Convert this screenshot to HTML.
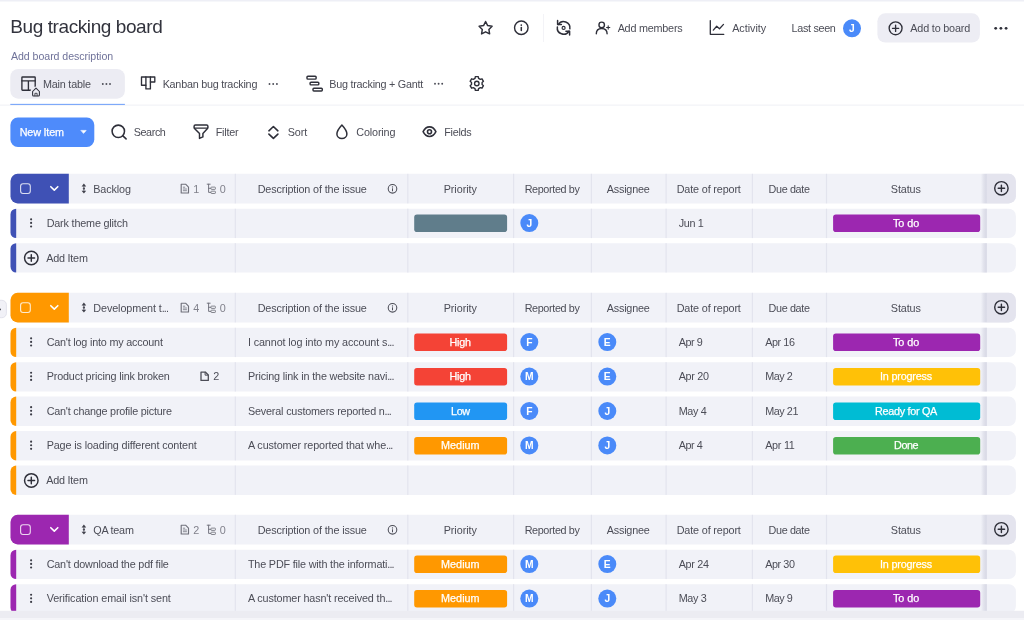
<!DOCTYPE html>
<html lang="en"><head><meta charset="utf-8"><title>Bug tracking board</title>
<style>
html,body{margin:0;padding:0;background:#fff}
body{width:1024px;height:620px;position:relative;overflow:hidden;font-family:"Liberation Sans", sans-serif}
body>div{position:absolute}
.ov{position:absolute;left:0;top:0;width:1024px;height:620px;overflow:hidden;pointer-events:none}
.tx{left:0;top:0;width:1024px;height:620px;will-change:transform}
.t{position:absolute;white-space:nowrap;line-height:20px;height:20px}
</style></head><body>
<svg class="ov" viewBox="0 0 1024 620">
<defs><linearGradient id="sh" x1="0" x2="1" y1="0" y2="0"><stop offset="0" stop-color="#d4d5e2" stop-opacity="0"/><stop offset=".45" stop-color="#d4d5e2" stop-opacity=".5"/><stop offset="1" stop-color="#d6d7e4" stop-opacity="1"/></linearGradient>
<linearGradient id="bt" x1="0" x2="0" y1="0" y2="1"><stop offset="0" stop-color="#ececf2"/><stop offset=".74" stop-color="#ececf2"/><stop offset=".8" stop-color="#f5f5f9"/><stop offset="1" stop-color="#f5f5f9"/></linearGradient></defs>
<rect x="0" y="0" width="1024" height="1.5" rx="0" fill="#eeeff6"/>
<rect x="543" y="14" width="1" height="28" rx="0" fill="#f3f3f7"/>
<rect x="877.4" y="13.3" width="102.5" height="29.3" rx="8" fill="#ededf4"/>
<rect x="10.3" y="69" width="114.6" height="29.7" rx="8" fill="#ececf3"/>
<rect x="0" y="104.6" width="1024" height="1" rx="0" fill="#eff0f5"/>
<rect x="10.3" y="103.85" width="114.6" height="1.1" rx="0" fill="#78a5f9"/>
<rect x="10.4" y="117.5" width="83.9" height="29.4" rx="7.5" fill="#4e8bfb"/>
<path d="M17.7 173.8H1008.7A7.2 7.2 0 0 1 1015.9 181V196.2A7.2 7.2 0 0 1 1008.7 203.4H17.7A7.2 7.2 0 0 1 10.5 196.2V181A7.2 7.2 0 0 1 17.7 173.8Z" fill="#f1f2f8"/>
<path d="M17.7 173.8H68.8V203.4H17.7A7.2 7.2 0 0 1 10.5 196.2V181A7.2 7.2 0 0 1 17.7 173.8Z" fill="#3f51b5"/>
<path d="M986.8 173.8H1008.7A7.2 7.2 0 0 1 1015.9 181V196.2A7.2 7.2 0 0 1 1008.7 203.4H986.8V173.8Z" fill="#e4e4ee"/>
<rect x="234.7" y="173.8" width="1.2" height="29.6" fill="#e3e4ee"/>
<rect x="407.2" y="173.8" width="1.2" height="29.6" fill="#e3e4ee"/>
<rect x="513" y="173.8" width="1.2" height="29.6" fill="#e3e4ee"/>
<rect x="590.8" y="173.8" width="1.2" height="29.6" fill="#e3e4ee"/>
<rect x="665.5" y="173.8" width="1.2" height="29.6" fill="#e3e4ee"/>
<rect x="751.8" y="173.8" width="1.2" height="29.6" fill="#e3e4ee"/>
<rect x="825.9" y="173.8" width="1.2" height="29.6" fill="#e3e4ee"/>
<rect x="980.8" y="173.8" width="6" height="29.6" fill="url(#sh)"/>
<path d="M17.7 208.7H1008.7A7.2 7.2 0 0 1 1015.9 215.9V230.9A7.2 7.2 0 0 1 1008.7 238.1H17.7A7.2 7.2 0 0 1 10.5 230.9V215.9A7.2 7.2 0 0 1 17.7 208.7Z" fill="#f1f2f8"/>
<path d="M16.2 208.7H16.2V238.1H16.2A5.7 5.7 0 0 1 10.5 232.4V214.4A5.7 5.7 0 0 1 16.2 208.7Z" fill="#3f51b5"/>
<rect x="234.7" y="208.7" width="1.2" height="29.4" fill="#e3e4ee"/>
<rect x="407.2" y="208.7" width="1.2" height="29.4" fill="#e3e4ee"/>
<rect x="513" y="208.7" width="1.2" height="29.4" fill="#e3e4ee"/>
<rect x="590.8" y="208.7" width="1.2" height="29.4" fill="#e3e4ee"/>
<rect x="665.5" y="208.7" width="1.2" height="29.4" fill="#e3e4ee"/>
<rect x="751.8" y="208.7" width="1.2" height="29.4" fill="#e3e4ee"/>
<rect x="825.9" y="208.7" width="1.2" height="29.4" fill="#e3e4ee"/>
<rect x="980.8" y="208.7" width="6" height="29.4" fill="url(#sh)"/>
<rect x="414.2" y="214.6" width="92.9" height="17.5" rx="2.8" fill="#607d8b"/>
<rect x="833.1" y="214.6" width="147.1" height="17.5" rx="2.8" fill="#9c27b0"/>
<path d="M17.7 243.15H1008.7A7.2 7.2 0 0 1 1015.9 250.35V265.35A7.2 7.2 0 0 1 1008.7 272.55H17.7A7.2 7.2 0 0 1 10.5 265.35V250.35A7.2 7.2 0 0 1 17.7 243.15Z" fill="#f1f2f8"/>
<path d="M16.2 243.15H16.2V272.55H16.2A5.7 5.7 0 0 1 10.5 266.85V248.85A5.7 5.7 0 0 1 16.2 243.15Z" fill="#3f51b5"/>
<rect x="234.7" y="243.15" width="1.2" height="29.4" fill="#e3e4ee"/>
<rect x="407.2" y="243.15" width="1.2" height="29.4" fill="#e3e4ee"/>
<rect x="513" y="243.15" width="1.2" height="29.4" fill="#e3e4ee"/>
<rect x="590.8" y="243.15" width="1.2" height="29.4" fill="#e3e4ee"/>
<rect x="665.5" y="243.15" width="1.2" height="29.4" fill="#e3e4ee"/>
<rect x="751.8" y="243.15" width="1.2" height="29.4" fill="#e3e4ee"/>
<rect x="825.9" y="243.15" width="1.2" height="29.4" fill="#e3e4ee"/>
<rect x="980.8" y="243.15" width="6" height="29.4" fill="url(#sh)"/>
<rect x="-6" y="300.3" width="12.4" height="17.4" rx="4.5" fill="#f1f1f7" stroke="#e2e2ec" stroke-width="1"/>
<path d="M17.7 292.8H1008.7A7.2 7.2 0 0 1 1015.9 300V315.2A7.2 7.2 0 0 1 1008.7 322.4H17.7A7.2 7.2 0 0 1 10.5 315.2V300A7.2 7.2 0 0 1 17.7 292.8Z" fill="#f1f2f8"/>
<path d="M17.7 292.8H68.8V322.4H17.7A7.2 7.2 0 0 1 10.5 315.2V300A7.2 7.2 0 0 1 17.7 292.8Z" fill="#ff9800"/>
<path d="M986.8 292.8H1008.7A7.2 7.2 0 0 1 1015.9 300V315.2A7.2 7.2 0 0 1 1008.7 322.4H986.8V292.8Z" fill="#e4e4ee"/>
<rect x="234.7" y="292.8" width="1.2" height="29.6" fill="#e3e4ee"/>
<rect x="407.2" y="292.8" width="1.2" height="29.6" fill="#e3e4ee"/>
<rect x="513" y="292.8" width="1.2" height="29.6" fill="#e3e4ee"/>
<rect x="590.8" y="292.8" width="1.2" height="29.6" fill="#e3e4ee"/>
<rect x="665.5" y="292.8" width="1.2" height="29.6" fill="#e3e4ee"/>
<rect x="751.8" y="292.8" width="1.2" height="29.6" fill="#e3e4ee"/>
<rect x="825.9" y="292.8" width="1.2" height="29.6" fill="#e3e4ee"/>
<rect x="980.8" y="292.8" width="6" height="29.6" fill="url(#sh)"/>
<path d="M17.7 327.7H1008.7A7.2 7.2 0 0 1 1015.9 334.9V349.9A7.2 7.2 0 0 1 1008.7 357.1H17.7A7.2 7.2 0 0 1 10.5 349.9V334.9A7.2 7.2 0 0 1 17.7 327.7Z" fill="#f1f2f8"/>
<path d="M16.2 327.7H16.2V357.1H16.2A5.7 5.7 0 0 1 10.5 351.4V333.4A5.7 5.7 0 0 1 16.2 327.7Z" fill="#ff9800"/>
<rect x="234.7" y="327.7" width="1.2" height="29.4" fill="#e3e4ee"/>
<rect x="407.2" y="327.7" width="1.2" height="29.4" fill="#e3e4ee"/>
<rect x="513" y="327.7" width="1.2" height="29.4" fill="#e3e4ee"/>
<rect x="590.8" y="327.7" width="1.2" height="29.4" fill="#e3e4ee"/>
<rect x="665.5" y="327.7" width="1.2" height="29.4" fill="#e3e4ee"/>
<rect x="751.8" y="327.7" width="1.2" height="29.4" fill="#e3e4ee"/>
<rect x="825.9" y="327.7" width="1.2" height="29.4" fill="#e3e4ee"/>
<rect x="980.8" y="327.7" width="6" height="29.4" fill="url(#sh)"/>
<rect x="414.2" y="333.6" width="92.9" height="17.5" rx="2.8" fill="#f44336"/>
<rect x="833.1" y="333.6" width="147.1" height="17.5" rx="2.8" fill="#9c27b0"/>
<path d="M17.7 362.15H1008.7A7.2 7.2 0 0 1 1015.9 369.35V384.35A7.2 7.2 0 0 1 1008.7 391.55H17.7A7.2 7.2 0 0 1 10.5 384.35V369.35A7.2 7.2 0 0 1 17.7 362.15Z" fill="#f1f2f8"/>
<path d="M16.2 362.15H16.2V391.55H16.2A5.7 5.7 0 0 1 10.5 385.85V367.85A5.7 5.7 0 0 1 16.2 362.15Z" fill="#ff9800"/>
<rect x="234.7" y="362.15" width="1.2" height="29.4" fill="#e3e4ee"/>
<rect x="407.2" y="362.15" width="1.2" height="29.4" fill="#e3e4ee"/>
<rect x="513" y="362.15" width="1.2" height="29.4" fill="#e3e4ee"/>
<rect x="590.8" y="362.15" width="1.2" height="29.4" fill="#e3e4ee"/>
<rect x="665.5" y="362.15" width="1.2" height="29.4" fill="#e3e4ee"/>
<rect x="751.8" y="362.15" width="1.2" height="29.4" fill="#e3e4ee"/>
<rect x="825.9" y="362.15" width="1.2" height="29.4" fill="#e3e4ee"/>
<rect x="980.8" y="362.15" width="6" height="29.4" fill="url(#sh)"/>
<rect x="414.2" y="368.05" width="92.9" height="17.5" rx="2.8" fill="#f44336"/>
<rect x="833.1" y="368.05" width="147.1" height="17.5" rx="2.8" fill="#ffc107"/>
<path d="M17.7 396.6H1008.7A7.2 7.2 0 0 1 1015.9 403.8V418.8A7.2 7.2 0 0 1 1008.7 426H17.7A7.2 7.2 0 0 1 10.5 418.8V403.8A7.2 7.2 0 0 1 17.7 396.6Z" fill="#f1f2f8"/>
<path d="M16.2 396.6H16.2V426H16.2A5.7 5.7 0 0 1 10.5 420.3V402.3A5.7 5.7 0 0 1 16.2 396.6Z" fill="#ff9800"/>
<rect x="234.7" y="396.6" width="1.2" height="29.4" fill="#e3e4ee"/>
<rect x="407.2" y="396.6" width="1.2" height="29.4" fill="#e3e4ee"/>
<rect x="513" y="396.6" width="1.2" height="29.4" fill="#e3e4ee"/>
<rect x="590.8" y="396.6" width="1.2" height="29.4" fill="#e3e4ee"/>
<rect x="665.5" y="396.6" width="1.2" height="29.4" fill="#e3e4ee"/>
<rect x="751.8" y="396.6" width="1.2" height="29.4" fill="#e3e4ee"/>
<rect x="825.9" y="396.6" width="1.2" height="29.4" fill="#e3e4ee"/>
<rect x="980.8" y="396.6" width="6" height="29.4" fill="url(#sh)"/>
<rect x="414.2" y="402.5" width="92.9" height="17.5" rx="2.8" fill="#2196f3"/>
<rect x="833.1" y="402.5" width="147.1" height="17.5" rx="2.8" fill="#00bcd4"/>
<path d="M17.7 431.05H1008.7A7.2 7.2 0 0 1 1015.9 438.25V453.25A7.2 7.2 0 0 1 1008.7 460.45H17.7A7.2 7.2 0 0 1 10.5 453.25V438.25A7.2 7.2 0 0 1 17.7 431.05Z" fill="#f1f2f8"/>
<path d="M16.2 431.05H16.2V460.45H16.2A5.7 5.7 0 0 1 10.5 454.75V436.75A5.7 5.7 0 0 1 16.2 431.05Z" fill="#ff9800"/>
<rect x="234.7" y="431.05" width="1.2" height="29.4" fill="#e3e4ee"/>
<rect x="407.2" y="431.05" width="1.2" height="29.4" fill="#e3e4ee"/>
<rect x="513" y="431.05" width="1.2" height="29.4" fill="#e3e4ee"/>
<rect x="590.8" y="431.05" width="1.2" height="29.4" fill="#e3e4ee"/>
<rect x="665.5" y="431.05" width="1.2" height="29.4" fill="#e3e4ee"/>
<rect x="751.8" y="431.05" width="1.2" height="29.4" fill="#e3e4ee"/>
<rect x="825.9" y="431.05" width="1.2" height="29.4" fill="#e3e4ee"/>
<rect x="980.8" y="431.05" width="6" height="29.4" fill="url(#sh)"/>
<rect x="414.2" y="436.95" width="92.9" height="17.5" rx="2.8" fill="#ff9800"/>
<rect x="833.1" y="436.95" width="147.1" height="17.5" rx="2.8" fill="#4caf50"/>
<path d="M17.7 465.5H1008.7A7.2 7.2 0 0 1 1015.9 472.7V487.7A7.2 7.2 0 0 1 1008.7 494.9H17.7A7.2 7.2 0 0 1 10.5 487.7V472.7A7.2 7.2 0 0 1 17.7 465.5Z" fill="#f1f2f8"/>
<path d="M16.2 465.5H16.2V494.9H16.2A5.7 5.7 0 0 1 10.5 489.2V471.2A5.7 5.7 0 0 1 16.2 465.5Z" fill="#ff9800"/>
<rect x="234.7" y="465.5" width="1.2" height="29.4" fill="#e3e4ee"/>
<rect x="407.2" y="465.5" width="1.2" height="29.4" fill="#e3e4ee"/>
<rect x="513" y="465.5" width="1.2" height="29.4" fill="#e3e4ee"/>
<rect x="590.8" y="465.5" width="1.2" height="29.4" fill="#e3e4ee"/>
<rect x="665.5" y="465.5" width="1.2" height="29.4" fill="#e3e4ee"/>
<rect x="751.8" y="465.5" width="1.2" height="29.4" fill="#e3e4ee"/>
<rect x="825.9" y="465.5" width="1.2" height="29.4" fill="#e3e4ee"/>
<rect x="980.8" y="465.5" width="6" height="29.4" fill="url(#sh)"/>
<path d="M17.7 514.8H1008.7A7.2 7.2 0 0 1 1015.9 522V537.2A7.2 7.2 0 0 1 1008.7 544.4H17.7A7.2 7.2 0 0 1 10.5 537.2V522A7.2 7.2 0 0 1 17.7 514.8Z" fill="#f1f2f8"/>
<path d="M17.7 514.8H68.8V544.4H17.7A7.2 7.2 0 0 1 10.5 537.2V522A7.2 7.2 0 0 1 17.7 514.8Z" fill="#9c27b0"/>
<path d="M986.8 514.8H1008.7A7.2 7.2 0 0 1 1015.9 522V537.2A7.2 7.2 0 0 1 1008.7 544.4H986.8V514.8Z" fill="#e4e4ee"/>
<rect x="234.7" y="514.8" width="1.2" height="29.6" fill="#e3e4ee"/>
<rect x="407.2" y="514.8" width="1.2" height="29.6" fill="#e3e4ee"/>
<rect x="513" y="514.8" width="1.2" height="29.6" fill="#e3e4ee"/>
<rect x="590.8" y="514.8" width="1.2" height="29.6" fill="#e3e4ee"/>
<rect x="665.5" y="514.8" width="1.2" height="29.6" fill="#e3e4ee"/>
<rect x="751.8" y="514.8" width="1.2" height="29.6" fill="#e3e4ee"/>
<rect x="825.9" y="514.8" width="1.2" height="29.6" fill="#e3e4ee"/>
<rect x="980.8" y="514.8" width="6" height="29.6" fill="url(#sh)"/>
<path d="M17.7 549.7H1008.7A7.2 7.2 0 0 1 1015.9 556.9V571.9A7.2 7.2 0 0 1 1008.7 579.1H17.7A7.2 7.2 0 0 1 10.5 571.9V556.9A7.2 7.2 0 0 1 17.7 549.7Z" fill="#f1f2f8"/>
<path d="M16.2 549.7H16.2V579.1H16.2A5.7 5.7 0 0 1 10.5 573.4V555.4A5.7 5.7 0 0 1 16.2 549.7Z" fill="#9c27b0"/>
<rect x="234.7" y="549.7" width="1.2" height="29.4" fill="#e3e4ee"/>
<rect x="407.2" y="549.7" width="1.2" height="29.4" fill="#e3e4ee"/>
<rect x="513" y="549.7" width="1.2" height="29.4" fill="#e3e4ee"/>
<rect x="590.8" y="549.7" width="1.2" height="29.4" fill="#e3e4ee"/>
<rect x="665.5" y="549.7" width="1.2" height="29.4" fill="#e3e4ee"/>
<rect x="751.8" y="549.7" width="1.2" height="29.4" fill="#e3e4ee"/>
<rect x="825.9" y="549.7" width="1.2" height="29.4" fill="#e3e4ee"/>
<rect x="980.8" y="549.7" width="6" height="29.4" fill="url(#sh)"/>
<rect x="414.2" y="555.6" width="92.9" height="17.5" rx="2.8" fill="#ff9800"/>
<rect x="833.1" y="555.6" width="147.1" height="17.5" rx="2.8" fill="#ffc107"/>
<path d="M17.7 584.15H1008.7A7.2 7.2 0 0 1 1015.9 591.35V606.35A7.2 7.2 0 0 1 1008.7 613.55H17.7A7.2 7.2 0 0 1 10.5 606.35V591.35A7.2 7.2 0 0 1 17.7 584.15Z" fill="#f1f2f8"/>
<path d="M16.2 584.15H16.2V613.55H16.2A5.7 5.7 0 0 1 10.5 607.85V589.85A5.7 5.7 0 0 1 16.2 584.15Z" fill="#9c27b0"/>
<rect x="234.7" y="584.15" width="1.2" height="29.4" fill="#e3e4ee"/>
<rect x="407.2" y="584.15" width="1.2" height="29.4" fill="#e3e4ee"/>
<rect x="513" y="584.15" width="1.2" height="29.4" fill="#e3e4ee"/>
<rect x="590.8" y="584.15" width="1.2" height="29.4" fill="#e3e4ee"/>
<rect x="665.5" y="584.15" width="1.2" height="29.4" fill="#e3e4ee"/>
<rect x="751.8" y="584.15" width="1.2" height="29.4" fill="#e3e4ee"/>
<rect x="825.9" y="584.15" width="1.2" height="29.4" fill="#e3e4ee"/>
<rect x="980.8" y="584.15" width="6" height="29.4" fill="url(#sh)"/>
<rect x="414.2" y="590.05" width="92.9" height="17.5" rx="2.8" fill="#ff9800"/>
<rect x="833.1" y="590.05" width="147.1" height="17.5" rx="2.8" fill="#9c27b0"/>
<path d="M485.60 21.50L487.63 25.56L492.11 26.23L488.88 29.42L489.63 33.89L485.60 31.80L481.57 33.89L482.32 29.42L479.09 26.23L483.57 25.56Z" fill="none" stroke="#2e2f39" stroke-width="1.45" stroke-linecap="round" stroke-linejoin="round" />
<circle cx="521.3" cy="27.8" r="6.75" fill="none" stroke="#2e2f39" stroke-width="1.4"/>
<circle cx="521.3" cy="25.1" r="0.85" fill="#2e2f39"/>
<path d="M521.3 27.5V30.6" fill="none" stroke="#2e2f39" stroke-width="1.5" stroke-linecap="round" stroke-linejoin="round" />
<path d="M558.26 24.56A6.3 6.3 0 0 1 569.84 28.78" fill="none" stroke="#2e2f39" stroke-width="1.5" stroke-linecap="round" stroke-linejoin="round" />
<path d="M568.94 31.24A6.3 6.3 0 0 1 557.36 27.02" fill="none" stroke="#2e2f39" stroke-width="1.5" stroke-linecap="round" stroke-linejoin="round" />
<path d="M557.6 20.6V24.4H561.4" fill="none" stroke="#2e2f39" stroke-width="1.5" stroke-linecap="round" stroke-linejoin="round" />
<path d="M569.6 35.0V31.3H565.9" fill="none" stroke="#2e2f39" stroke-width="1.5" stroke-linecap="round" stroke-linejoin="round" />
<circle cx="563.6" cy="27.9" r="1.5" fill="none" stroke="#2e2f39" stroke-width="1.2"/>
<circle cx="601.7" cy="24.9" r="2.75" fill="none" stroke="#2e2f39" stroke-width="1.4"/>
<path d="M596.3 33.8C596.3 30.3 598.6 28.5 601.7 28.5S607.1 30.3 607.1 33.8" fill="none" stroke="#2e2f39" stroke-width="1.4" stroke-linecap="round" stroke-linejoin="round" />
<path d="M608.2 25.9V29.1M606.6 27.5H609.8" fill="none" stroke="#2e2f39" stroke-width="1.1" stroke-linecap="round" stroke-linejoin="round" />
<path d="M710.3 20.6V34.3H723.8" fill="none" stroke="#2e2f39" stroke-width="1.3" stroke-linecap="round" stroke-linejoin="round" />
<path d="M713.3 30.1L716.7 26.3L719.5 28.7L723.5 24.4" fill="none" stroke="#2e2f39" stroke-width="1.3" stroke-linecap="round" stroke-linejoin="round" />
<circle cx="852" cy="28.3" r="9" fill="#4a8af9"/>
<circle cx="895.6" cy="28.3" r="6.45" fill="none" stroke="#2e2f39" stroke-width="1.35"/>
<path d="M895.6 25.2V31.4M892.5 28.3H898.7" fill="none" stroke="#2e2f39" stroke-width="1.35" stroke-linecap="round" stroke-linejoin="round" />
<circle cx="995.7" cy="28.3" r="1.4" fill="#2e2f39"/>
<circle cx="1000.9" cy="28.3" r="1.4" fill="#2e2f39"/>
<circle cx="1006.1" cy="28.3" r="1.4" fill="#2e2f39"/>
<rect x="21.9" y="77" width="13.3" height="13.2" rx="0.6" fill="none" stroke="#2e2f39" stroke-width="1.35"/>
<path d="M21.9 80.8H35.2M28.4 80.8V90.2" fill="none" stroke="#2e2f39" stroke-width="1.35" stroke-linecap="round" stroke-linejoin="round" />
<circle cx="36" cy="92" r="5.6" fill="#ececf3"/>
<path d="M32.6 91.5L36.0 88.1L39.4 91.5V94.9Q39.4 95.9 38.4 95.9H33.6Q32.6 95.9 32.6 94.9Z" fill="none" stroke="#2e2f39" stroke-width="1.05" stroke-linecap="round" stroke-linejoin="round" />
<path d="M34.9 95.7V93.3H37.1V95.7" fill="none" stroke="#2e2f39" stroke-width="0.85" stroke-linecap="round" stroke-linejoin="round" />
<circle cx="102.8" cy="84" r="0.95" fill="#4c4d57"/>
<circle cx="106.4" cy="84" r="0.95" fill="#4c4d57"/>
<circle cx="110" cy="84" r="0.95" fill="#4c4d57"/>
<path d="M141.5 77.0H154.8V82.0H150.4V88.9H145.9V85.2H141.5Z" fill="none" stroke="#2e2f39" stroke-width="1.35" stroke-linecap="round" stroke-linejoin="round" />
<path d="M145.9 77.0V85.2M150.4 77.0V82.0" fill="none" stroke="#2e2f39" stroke-width="1.35" stroke-linecap="round" stroke-linejoin="round" />
<circle cx="269.5" cy="84" r="0.95" fill="#4c4d57"/>
<circle cx="273.2" cy="84" r="0.95" fill="#4c4d57"/>
<circle cx="276.9" cy="84" r="0.95" fill="#4c4d57"/>
<rect x="307" y="76.2" width="9.1" height="2.9" rx="0.9" fill="none" stroke="#2e2f39" stroke-width="1.45"/>
<rect x="310.1" y="82.2" width="8.7" height="2.7" rx="0.9" fill="none" stroke="#2e2f39" stroke-width="1.45"/>
<rect x="313" y="88.3" width="9.3" height="2.7" rx="0.9" fill="none" stroke="#2e2f39" stroke-width="1.45"/>
<circle cx="435" cy="83.8" r="0.95" fill="#4c4d57"/>
<circle cx="438.6" cy="83.8" r="0.95" fill="#4c4d57"/>
<circle cx="442.2" cy="83.8" r="0.95" fill="#4c4d57"/>
<path d="M475.02 78.40L475.34 76.65L478.26 76.65L478.58 78.40L480.33 79.41L482.00 78.82L483.46 81.34L482.10 82.49L482.10 84.51L483.46 85.66L482.00 88.18L480.33 87.59L478.58 88.60L478.26 90.35L475.34 90.35L475.02 88.60L473.27 87.59L471.60 88.18L470.14 85.66L471.50 84.51L471.50 82.49L470.14 81.34L471.60 78.82L473.27 79.41Z" fill="none" stroke="#2e2f39" stroke-width="1.4" stroke-linecap="round" stroke-linejoin="round" />
<circle cx="476.8" cy="83.5" r="2.25" fill="none" stroke="#2e2f39" stroke-width="1.35"/>
<path d="M81.2 130.4H86.2L83.7 133.2Z" fill="#fff" stroke="#fff" stroke-width="0.6" stroke-linecap="round" stroke-linejoin="round" />
<circle cx="118.3" cy="131.3" r="6.2" fill="none" stroke="#2e2f39" stroke-width="1.55"/>
<path d="M122.9 135.9L126.1 138.9" fill="none" stroke="#2e2f39" stroke-width="1.55" stroke-linecap="round" stroke-linejoin="round" />
<path d="M195.4 124.9H206.6Q207.9 124.9 207.9 126.2V127.5Q207.9 128.1 207.5 128.5L202.9 133.5V136.9L199.5 138.4V133.5L194.5 128.5Q194.1 128.1 194.1 127.5V126.2Q194.1 124.9 195.4 124.9Z" fill="none" stroke="#2e2f39" stroke-width="1.45" stroke-linecap="round" stroke-linejoin="round" />
<path d="M194.4 128.1H207.6" fill="none" stroke="#2e2f39" stroke-width="1.2" stroke-linecap="round" stroke-linejoin="round" />
<path d="M268.9 130.8L273.4 126.5L277.9 130.8M268.9 134.1L273.4 138.4L277.9 134.1" fill="none" stroke="#2e2f39" stroke-width="1.6" stroke-linecap="round" stroke-linejoin="round" />
<path d="M341.9 125.1C343.9 127.3 346.9 130.7 346.9 134.0A5.0 4.500 0 0 1 336.9 134.0C336.9 130.7 339.9 127.3 341.9 125.1Z" fill="none" stroke="#2e2f39" stroke-width="1.5" stroke-linecap="round" stroke-linejoin="round" />
<path d="M423.1 131.7C424.6 128.6 426.8 126.9 429.5 126.9S434.4 128.6 435.9 131.7C434.4 134.8 432.2 136.500 429.5 136.500S424.6 134.8 423.1 131.7Z" fill="none" stroke="#2e2f39" stroke-width="1.55" stroke-linecap="round" stroke-linejoin="round" />
<circle cx="429.5" cy="131.8" r="2" fill="none" stroke="#2e2f39" stroke-width="1.6"/>
<rect x="20.6" y="183.8" width="9.7" height="9.7" rx="2.4" fill="none" stroke="rgba(255,255,255,.82)" stroke-width="1.1"/>
<path d="M50.8 186.7L54.3 190.1L57.8 186.7" fill="none" stroke="#fff" stroke-width="1.6" stroke-linecap="round" stroke-linejoin="round" />
<path d="M83.9 183.6L86.2 186.5H81.6Z" fill="#3c3d47"/>
<path d="M83.9 193.6L86.2 190.7H81.6Z" fill="#3c3d47"/>
<circle cx="83.9" cy="188.6" r="1.15" fill="#4c4d57"/>
<path d="M83.9 185.6V191.6" fill="none" stroke="#4c4d57" stroke-width="0.7" stroke-linecap="round" stroke-linejoin="round" />
<path d="M181.2 184.2H185.6L188.5 187.1V193H181.2Z" fill="none" stroke="#70717b" stroke-width="1.15" stroke-linecap="round" stroke-linejoin="round" />
<path d="M183.3 187.2H184.8M183.3 189H186.500M183.3 190.7H186.500" fill="none" stroke="#70717b" stroke-width="0.8" stroke-linecap="round" stroke-linejoin="round" />
<path d="M207.2 184.2H210.2M208.6 184.2V192.4H210.6M208.6 188.3H210.6" fill="none" stroke="#70717b" stroke-width="0.95" stroke-linecap="round" stroke-linejoin="round" />
<rect x="211" y="187.1" width="4.4" height="2.3" rx="0.6" fill="none" stroke="#70717b" stroke-width="0.85"/>
<rect x="211" y="191.2" width="4.4" height="2.3" rx="0.6" fill="none" stroke="#70717b" stroke-width="0.85"/>
<circle cx="392.5" cy="188.8" r="4.3" fill="none" stroke="#4c4d57" stroke-width="1.05"/>
<path d="M392.5 188.7V190.9" fill="none" stroke="#4c4d57" stroke-width="1.0" stroke-linecap="round" stroke-linejoin="round" />
<circle cx="392.5" cy="186.9" r="0.65" fill="#4c4d57"/>
<circle cx="1001.4" cy="188.3" r="6.7" fill="none" stroke="#2e2f39" stroke-width="1.4"/>
<path d="M1001.4 185.1V191.5M998.2 188.3H1004.6" fill="none" stroke="#2e2f39" stroke-width="1.4" stroke-linecap="round" stroke-linejoin="round" />
<circle cx="31.1" cy="219.3" r="1.08" fill="#3c3d47"/>
<circle cx="31.1" cy="222.9" r="1.08" fill="#3c3d47"/>
<circle cx="31.1" cy="226.5" r="1.08" fill="#3c3d47"/>
<circle cx="529.3" cy="223.1" r="9" fill="#4a8af9"/>
<circle cx="31.3" cy="258.05" r="6.75" fill="none" stroke="#2e2f39" stroke-width="1.45"/>
<path d="M31.3 254.75V261.35M28 258.05H34.6" fill="none" stroke="#2e2f39" stroke-width="1.45" stroke-linecap="round" stroke-linejoin="round" />
<circle cx="0.1" cy="309.4" r="0.9" fill="#4c4d57"/>
<rect x="20.6" y="302.8" width="9.7" height="9.7" rx="2.4" fill="none" stroke="rgba(255,255,255,.82)" stroke-width="1.1"/>
<path d="M50.8 305.7L54.3 309.1L57.8 305.7" fill="none" stroke="#fff" stroke-width="1.6" stroke-linecap="round" stroke-linejoin="round" />
<path d="M83.9 302.6L86.2 305.5H81.6Z" fill="#3c3d47"/>
<path d="M83.9 312.6L86.2 309.7H81.6Z" fill="#3c3d47"/>
<circle cx="83.9" cy="307.6" r="1.15" fill="#4c4d57"/>
<path d="M83.9 304.6V310.6" fill="none" stroke="#4c4d57" stroke-width="0.7" stroke-linecap="round" stroke-linejoin="round" />
<path d="M181.2 303.2H185.6L188.5 306.1V312H181.2Z" fill="none" stroke="#70717b" stroke-width="1.15" stroke-linecap="round" stroke-linejoin="round" />
<path d="M183.3 306.2H184.8M183.3 308H186.500M183.3 309.7H186.500" fill="none" stroke="#70717b" stroke-width="0.8" stroke-linecap="round" stroke-linejoin="round" />
<path d="M207.2 303.2H210.2M208.6 303.2V311.4H210.6M208.6 307.3H210.6" fill="none" stroke="#70717b" stroke-width="0.95" stroke-linecap="round" stroke-linejoin="round" />
<rect x="211" y="306.1" width="4.4" height="2.3" rx="0.6" fill="none" stroke="#70717b" stroke-width="0.85"/>
<rect x="211" y="310.2" width="4.4" height="2.3" rx="0.6" fill="none" stroke="#70717b" stroke-width="0.85"/>
<circle cx="392.5" cy="307.8" r="4.3" fill="none" stroke="#4c4d57" stroke-width="1.05"/>
<path d="M392.5 307.7V309.9" fill="none" stroke="#4c4d57" stroke-width="1.0" stroke-linecap="round" stroke-linejoin="round" />
<circle cx="392.5" cy="305.9" r="0.65" fill="#4c4d57"/>
<circle cx="1001.4" cy="307.3" r="6.7" fill="none" stroke="#2e2f39" stroke-width="1.4"/>
<path d="M1001.4 304.1V310.5M998.2 307.3H1004.6" fill="none" stroke="#2e2f39" stroke-width="1.4" stroke-linecap="round" stroke-linejoin="round" />
<circle cx="31.1" cy="338.3" r="1.08" fill="#3c3d47"/>
<circle cx="31.1" cy="341.9" r="1.08" fill="#3c3d47"/>
<circle cx="31.1" cy="345.5" r="1.08" fill="#3c3d47"/>
<circle cx="529.3" cy="342.1" r="9" fill="#4a8af9"/>
<circle cx="607.3" cy="342.1" r="9" fill="#4a8af9"/>
<circle cx="31.1" cy="372.75" r="1.08" fill="#3c3d47"/>
<circle cx="31.1" cy="376.35" r="1.08" fill="#3c3d47"/>
<circle cx="31.1" cy="379.95" r="1.08" fill="#3c3d47"/>
<path d="M201 372.05H205.3L208.3 375.05V380.45H201Z" fill="none" stroke="#4c4d57" stroke-width="1.3" stroke-linecap="round" stroke-linejoin="round" />
<path d="M205.1 372.25V375.15H208.1" fill="none" stroke="#4c4d57" stroke-width="1.0" stroke-linecap="round" stroke-linejoin="round" />
<circle cx="529.3" cy="376.55" r="9" fill="#4a8af9"/>
<circle cx="607.3" cy="376.55" r="9" fill="#4a8af9"/>
<circle cx="31.1" cy="407.2" r="1.08" fill="#3c3d47"/>
<circle cx="31.1" cy="410.8" r="1.08" fill="#3c3d47"/>
<circle cx="31.1" cy="414.4" r="1.08" fill="#3c3d47"/>
<circle cx="529.3" cy="411" r="9" fill="#4a8af9"/>
<circle cx="607.3" cy="411" r="9" fill="#4a8af9"/>
<circle cx="31.1" cy="441.65" r="1.08" fill="#3c3d47"/>
<circle cx="31.1" cy="445.25" r="1.08" fill="#3c3d47"/>
<circle cx="31.1" cy="448.85" r="1.08" fill="#3c3d47"/>
<circle cx="529.3" cy="445.45" r="9" fill="#4a8af9"/>
<circle cx="607.3" cy="445.45" r="9" fill="#4a8af9"/>
<circle cx="31.3" cy="480.4" r="6.75" fill="none" stroke="#2e2f39" stroke-width="1.45"/>
<path d="M31.3 477.1V483.7M28 480.4H34.6" fill="none" stroke="#2e2f39" stroke-width="1.45" stroke-linecap="round" stroke-linejoin="round" />
<rect x="20.6" y="524.8" width="9.7" height="9.7" rx="2.4" fill="none" stroke="rgba(255,255,255,.82)" stroke-width="1.1"/>
<path d="M50.8 527.7L54.3 531.1L57.8 527.7" fill="none" stroke="#fff" stroke-width="1.6" stroke-linecap="round" stroke-linejoin="round" />
<path d="M83.9 524.6L86.2 527.5H81.6Z" fill="#3c3d47"/>
<path d="M83.9 534.6L86.2 531.7H81.6Z" fill="#3c3d47"/>
<circle cx="83.9" cy="529.6" r="1.15" fill="#4c4d57"/>
<path d="M83.9 526.6V532.6" fill="none" stroke="#4c4d57" stroke-width="0.7" stroke-linecap="round" stroke-linejoin="round" />
<path d="M181.2 525.2H185.6L188.5 528.1V534H181.2Z" fill="none" stroke="#70717b" stroke-width="1.15" stroke-linecap="round" stroke-linejoin="round" />
<path d="M183.3 528.2H184.8M183.3 530H186.500M183.3 531.7H186.500" fill="none" stroke="#70717b" stroke-width="0.8" stroke-linecap="round" stroke-linejoin="round" />
<path d="M207.2 525.2H210.2M208.6 525.2V533.4H210.6M208.6 529.3H210.6" fill="none" stroke="#70717b" stroke-width="0.95" stroke-linecap="round" stroke-linejoin="round" />
<rect x="211" y="528.1" width="4.4" height="2.3" rx="0.6" fill="none" stroke="#70717b" stroke-width="0.85"/>
<rect x="211" y="532.2" width="4.4" height="2.3" rx="0.6" fill="none" stroke="#70717b" stroke-width="0.85"/>
<circle cx="392.5" cy="529.8" r="4.3" fill="none" stroke="#4c4d57" stroke-width="1.05"/>
<path d="M392.5 529.7V531.9" fill="none" stroke="#4c4d57" stroke-width="1.0" stroke-linecap="round" stroke-linejoin="round" />
<circle cx="392.5" cy="527.9" r="0.65" fill="#4c4d57"/>
<circle cx="1001.4" cy="529.3" r="6.7" fill="none" stroke="#2e2f39" stroke-width="1.4"/>
<path d="M1001.4 526.1V532.5M998.2 529.3H1004.6" fill="none" stroke="#2e2f39" stroke-width="1.4" stroke-linecap="round" stroke-linejoin="round" />
<circle cx="31.1" cy="560.3" r="1.08" fill="#3c3d47"/>
<circle cx="31.1" cy="563.9" r="1.08" fill="#3c3d47"/>
<circle cx="31.1" cy="567.5" r="1.08" fill="#3c3d47"/>
<circle cx="529.3" cy="564.1" r="9" fill="#4a8af9"/>
<circle cx="607.3" cy="564.1" r="9" fill="#4a8af9"/>
<circle cx="31.1" cy="594.75" r="1.08" fill="#3c3d47"/>
<circle cx="31.1" cy="598.35" r="1.08" fill="#3c3d47"/>
<circle cx="31.1" cy="601.95" r="1.08" fill="#3c3d47"/>
<circle cx="529.3" cy="598.55" r="9" fill="#4a8af9"/>
<circle cx="607.3" cy="598.55" r="9" fill="#4a8af9"/>
<rect x="0" y="610.8" width="1024" height="9.2" fill="url(#bt)"/>
</svg>
<div class="tx">
<span class="t" style="left:10.36px;top:16.70px;font-size:19px;color:#32333d;letter-spacing:-0.42px;">Bug tracking board</span>
<span class="t" style="left:10.96px;top:45.60px;font-size:10.6px;color:#6f7299;letter-spacing:-0.042px;">Add board description</span>
<span class="t" style="left:617.65px;top:18.20px;font-size:10.8px;color:#4c4d57;letter-spacing:-0.218px;">Add members</span>
<span class="t" style="left:732.15px;top:18.20px;font-size:10.8px;color:#4c4d57;letter-spacing:-0.023px;">Activity</span>
<span class="t" style="left:791.55px;top:18.20px;font-size:10.8px;color:#4c4d57;letter-spacing:-0.311px;">Last seen</span>
<span class="t" style="left:811.80px;width:80px;text-align:center;top:18.70px;font-size:10.3px;color:#fff;font-weight:700;">J</span>
<span class="t" style="left:910.35px;top:18.20px;font-size:10.8px;color:#4c4d57;letter-spacing:-0.182px;">Add to board</span>
<span class="t" style="left:42.95px;top:73.60px;font-size:10.8px;color:#4c4d57;letter-spacing:-0.199px;">Main table</span>
<span class="t" style="left:162.65px;top:73.60px;font-size:10.8px;color:#4c4d57;letter-spacing:-0.239px;">Kanban bug tracking</span>
<span class="t" style="left:329.35px;top:73.60px;font-size:10.8px;color:#4c4d57;letter-spacing:-0.258px;">Bug tracking + Gantt</span>
<span class="t" style="left:19.75px;top:122.10px;font-size:10.8px;color:#fff;letter-spacing:-0.196px;-webkit-text-stroke:0.25px #fff;">New Item</span>
<span class="t" style="left:133.75px;top:122.10px;font-size:10.8px;color:#4c4d57;letter-spacing:-0.42px;">Search</span>
<span class="t" style="left:215.75px;top:122.10px;font-size:10.8px;color:#4c4d57;letter-spacing:-0.252px;">Filter</span>
<span class="t" style="left:287.75px;top:122.10px;font-size:10.8px;color:#4c4d57;letter-spacing:-0.124px;">Sort</span>
<span class="t" style="left:356.25px;top:122.10px;font-size:10.8px;color:#4c4d57;letter-spacing:-0.14px;">Coloring</span>
<span class="t" style="left:444.35px;top:122.10px;font-size:10.8px;color:#4c4d57;letter-spacing:-0.315px;">Fields</span>
<span class="t" style="left:93.25px;top:178.70px;font-size:10.8px;color:#4c4d57;letter-spacing:-0.13px;">Backlog</span>
<span class="t" style="left:193.15px;top:178.70px;font-size:10.8px;color:#80818b;">1</span>
<span class="t" style="left:219.85px;top:178.70px;font-size:10.8px;color:#80818b;">0</span>
<span class="t" style="left:257.65px;top:178.70px;font-size:10.8px;color:#4c4d57;letter-spacing:-0.13px;">Description of the issue</span>
<span class="t" style="left:443.65px;top:178.70px;font-size:10.8px;color:#4c4d57;letter-spacing:-0.051px;">Priority</span>
<span class="t" style="left:524.65px;top:178.70px;font-size:10.8px;color:#4c4d57;letter-spacing:-0.359px;">Reported by</span>
<span class="t" style="left:606.65px;top:178.70px;font-size:10.8px;color:#4c4d57;letter-spacing:-0.169px;">Assignee</span>
<span class="t" style="left:676.65px;top:178.70px;font-size:10.8px;color:#4c4d57;letter-spacing:-0.137px;">Date of report</span>
<span class="t" style="left:768.55px;top:178.70px;font-size:10.8px;color:#4c4d57;letter-spacing:-0.355px;">Due date</span>
<span class="t" style="left:890.85px;top:178.70px;font-size:10.8px;color:#4c4d57;letter-spacing:-0.114px;">Status</span>
<span class="t" style="left:46.65px;top:212.90px;font-size:10.8px;color:#4c4d57;letter-spacing:-0.173px;">Dark theme glitch</span>
<span class="t" style="left:489.30px;width:80px;text-align:center;top:213.60px;font-size:10.3px;color:#fff;font-weight:700;">J</span>
<span class="t" style="left:678.65px;top:212.90px;font-size:10.8px;color:#4c4d57;letter-spacing:-0.295px;">Jun 1</span>
<span class="t" style="left:893.05px;top:212.90px;font-size:10.8px;color:#fff;letter-spacing:-0.07px;-webkit-text-stroke:0.25px #fff;">To do</span>
<span class="t" style="left:46.15px;top:248.05px;font-size:10.8px;color:#4c4d57;letter-spacing:-0.211px;">Add Item</span>
<span class="t" style="left:93.25px;top:297.70px;font-size:10.8px;color:#4c4d57;letter-spacing:-0.086px;">Development t<span style="letter-spacing:-0.9px">...</span></span>
<span class="t" style="left:193.15px;top:297.70px;font-size:10.8px;color:#80818b;">4</span>
<span class="t" style="left:219.85px;top:297.70px;font-size:10.8px;color:#80818b;">0</span>
<span class="t" style="left:257.65px;top:297.70px;font-size:10.8px;color:#4c4d57;letter-spacing:-0.13px;">Description of the issue</span>
<span class="t" style="left:443.65px;top:297.70px;font-size:10.8px;color:#4c4d57;letter-spacing:-0.051px;">Priority</span>
<span class="t" style="left:524.65px;top:297.70px;font-size:10.8px;color:#4c4d57;letter-spacing:-0.359px;">Reported by</span>
<span class="t" style="left:606.65px;top:297.70px;font-size:10.8px;color:#4c4d57;letter-spacing:-0.169px;">Assignee</span>
<span class="t" style="left:676.65px;top:297.70px;font-size:10.8px;color:#4c4d57;letter-spacing:-0.137px;">Date of report</span>
<span class="t" style="left:768.55px;top:297.70px;font-size:10.8px;color:#4c4d57;letter-spacing:-0.355px;">Due date</span>
<span class="t" style="left:890.85px;top:297.70px;font-size:10.8px;color:#4c4d57;letter-spacing:-0.114px;">Status</span>
<span class="t" style="left:46.65px;top:331.90px;font-size:10.8px;color:#4c4d57;letter-spacing:-0.194px;">Can't log into my account</span>
<span class="t" style="left:247.95px;top:331.90px;font-size:10.8px;color:#4c4d57;letter-spacing:-0.119px;">I cannot log into my account s<span style="letter-spacing:-0.9px">...</span></span>
<span class="t" style="left:449.55px;top:331.90px;font-size:10.8px;color:#fff;letter-spacing:-0.226px;-webkit-text-stroke:0.25px #fff;">High</span>
<span class="t" style="left:489.30px;width:80px;text-align:center;top:332.60px;font-size:10.3px;color:#fff;font-weight:700;">F</span>
<span class="t" style="left:567.30px;width:80px;text-align:center;top:332.60px;font-size:10.3px;color:#fff;font-weight:700;">E</span>
<span class="t" style="left:678.65px;top:331.90px;font-size:10.8px;color:#4c4d57;letter-spacing:-0.393px;">Apr 9</span>
<span class="t" style="left:765.15px;top:331.90px;font-size:10.8px;color:#4c4d57;letter-spacing:-0.414px;">Apr 16</span>
<span class="t" style="left:893.05px;top:331.90px;font-size:10.8px;color:#fff;letter-spacing:-0.07px;-webkit-text-stroke:0.25px #fff;">To do</span>
<span class="t" style="left:46.65px;top:366.35px;font-size:10.8px;color:#4c4d57;letter-spacing:-0.154px;">Product pricing link broken</span>
<span class="t" style="left:213.15px;top:366.35px;font-size:10.8px;color:#4c4d57;">2</span>
<span class="t" style="left:247.95px;top:366.35px;font-size:10.8px;color:#4c4d57;letter-spacing:-0.147px;">Pricing link in the website navi<span style="letter-spacing:-0.9px">...</span></span>
<span class="t" style="left:449.55px;top:366.35px;font-size:10.8px;color:#fff;letter-spacing:-0.226px;-webkit-text-stroke:0.25px #fff;">High</span>
<span class="t" style="left:489.30px;width:80px;text-align:center;top:367.05px;font-size:10.3px;color:#fff;font-weight:700;">M</span>
<span class="t" style="left:567.30px;width:80px;text-align:center;top:367.05px;font-size:10.3px;color:#fff;font-weight:700;">E</span>
<span class="t" style="left:678.65px;top:366.35px;font-size:10.8px;color:#4c4d57;letter-spacing:-0.314px;">Apr 20</span>
<span class="t" style="left:765.15px;top:366.35px;font-size:10.8px;color:#4c4d57;letter-spacing:-0.417px;">May 2</span>
<span class="t" style="left:880.05px;top:366.35px;font-size:10.8px;color:#fff;letter-spacing:-0.188px;-webkit-text-stroke:0.25px #fff;">In progress</span>
<span class="t" style="left:46.65px;top:400.80px;font-size:10.8px;color:#4c4d57;letter-spacing:-0.217px;">Can't change profile picture</span>
<span class="t" style="left:247.95px;top:400.80px;font-size:10.8px;color:#4c4d57;letter-spacing:-0.177px;">Several customers reported n<span style="letter-spacing:-0.9px">...</span></span>
<span class="t" style="left:451.05px;top:400.80px;font-size:10.8px;color:#fff;letter-spacing:-0.42px;-webkit-text-stroke:0.25px #fff;">Low</span>
<span class="t" style="left:489.30px;width:80px;text-align:center;top:401.50px;font-size:10.3px;color:#fff;font-weight:700;">F</span>
<span class="t" style="left:567.30px;width:80px;text-align:center;top:401.50px;font-size:10.3px;color:#fff;font-weight:700;">J</span>
<span class="t" style="left:678.65px;top:400.80px;font-size:10.8px;color:#4c4d57;letter-spacing:-0.292px;">May 4</span>
<span class="t" style="left:765.15px;top:400.80px;font-size:10.8px;color:#4c4d57;letter-spacing:-0.42px;">May 21</span>
<span class="t" style="left:875.05px;top:400.80px;font-size:10.8px;color:#fff;letter-spacing:-0.298px;-webkit-text-stroke:0.25px #fff;">Ready for QA</span>
<span class="t" style="left:46.65px;top:435.25px;font-size:10.8px;color:#4c4d57;letter-spacing:-0.12px;">Page is loading different content</span>
<span class="t" style="left:247.95px;top:435.25px;font-size:10.8px;color:#4c4d57;letter-spacing:-0.104px;">A customer reported that whe<span style="letter-spacing:-0.9px">...</span></span>
<span class="t" style="left:441.05px;top:435.25px;font-size:10.8px;color:#fff;letter-spacing:0.027px;-webkit-text-stroke:0.25px #fff;">Medium</span>
<span class="t" style="left:489.30px;width:80px;text-align:center;top:435.95px;font-size:10.3px;color:#fff;font-weight:700;">M</span>
<span class="t" style="left:567.30px;width:80px;text-align:center;top:435.95px;font-size:10.3px;color:#fff;font-weight:700;">J</span>
<span class="t" style="left:678.65px;top:435.25px;font-size:10.8px;color:#4c4d57;letter-spacing:-0.393px;">Apr 4</span>
<span class="t" style="left:765.15px;top:435.25px;font-size:10.8px;color:#4c4d57;letter-spacing:-0.255px;">Apr 11</span>
<span class="t" style="left:894.05px;top:435.25px;font-size:10.8px;color:#fff;letter-spacing:-0.42px;-webkit-text-stroke:0.25px #fff;">Done</span>
<span class="t" style="left:46.15px;top:470.40px;font-size:10.8px;color:#4c4d57;letter-spacing:-0.211px;">Add Item</span>
<span class="t" style="left:93.25px;top:519.70px;font-size:10.8px;color:#4c4d57;letter-spacing:-0.229px;">QA team</span>
<span class="t" style="left:193.15px;top:519.70px;font-size:10.8px;color:#80818b;">2</span>
<span class="t" style="left:219.85px;top:519.70px;font-size:10.8px;color:#80818b;">0</span>
<span class="t" style="left:257.65px;top:519.70px;font-size:10.8px;color:#4c4d57;letter-spacing:-0.13px;">Description of the issue</span>
<span class="t" style="left:443.65px;top:519.70px;font-size:10.8px;color:#4c4d57;letter-spacing:-0.051px;">Priority</span>
<span class="t" style="left:524.65px;top:519.70px;font-size:10.8px;color:#4c4d57;letter-spacing:-0.359px;">Reported by</span>
<span class="t" style="left:606.65px;top:519.70px;font-size:10.8px;color:#4c4d57;letter-spacing:-0.169px;">Assignee</span>
<span class="t" style="left:676.65px;top:519.70px;font-size:10.8px;color:#4c4d57;letter-spacing:-0.137px;">Date of report</span>
<span class="t" style="left:768.55px;top:519.70px;font-size:10.8px;color:#4c4d57;letter-spacing:-0.355px;">Due date</span>
<span class="t" style="left:890.85px;top:519.70px;font-size:10.8px;color:#4c4d57;letter-spacing:-0.114px;">Status</span>
<span class="t" style="left:46.65px;top:553.90px;font-size:10.8px;color:#4c4d57;letter-spacing:-0.18px;">Can't download the pdf file</span>
<span class="t" style="left:247.95px;top:553.90px;font-size:10.8px;color:#4c4d57;letter-spacing:-0.169px;">The PDF file with the informati<span style="letter-spacing:-0.9px">...</span></span>
<span class="t" style="left:441.05px;top:553.90px;font-size:10.8px;color:#fff;letter-spacing:0.027px;-webkit-text-stroke:0.25px #fff;">Medium</span>
<span class="t" style="left:489.30px;width:80px;text-align:center;top:554.60px;font-size:10.3px;color:#fff;font-weight:700;">M</span>
<span class="t" style="left:567.30px;width:80px;text-align:center;top:554.60px;font-size:10.3px;color:#fff;font-weight:700;">E</span>
<span class="t" style="left:678.65px;top:553.90px;font-size:10.8px;color:#4c4d57;letter-spacing:-0.314px;">Apr 24</span>
<span class="t" style="left:765.15px;top:553.90px;font-size:10.8px;color:#4c4d57;letter-spacing:-0.414px;">Apr 30</span>
<span class="t" style="left:880.05px;top:553.90px;font-size:10.8px;color:#fff;letter-spacing:-0.188px;-webkit-text-stroke:0.25px #fff;">In progress</span>
<span class="t" style="left:46.65px;top:588.35px;font-size:10.8px;color:#4c4d57;letter-spacing:-0.095px;">Verification email isn't sent</span>
<span class="t" style="left:247.95px;top:588.35px;font-size:10.8px;color:#4c4d57;letter-spacing:-0.134px;">A customer hasn't received th<span style="letter-spacing:-0.9px">...</span></span>
<span class="t" style="left:441.05px;top:588.35px;font-size:10.8px;color:#fff;letter-spacing:0.027px;-webkit-text-stroke:0.25px #fff;">Medium</span>
<span class="t" style="left:489.30px;width:80px;text-align:center;top:589.05px;font-size:10.3px;color:#fff;font-weight:700;">M</span>
<span class="t" style="left:567.30px;width:80px;text-align:center;top:589.05px;font-size:10.3px;color:#fff;font-weight:700;">J</span>
<span class="t" style="left:678.65px;top:588.35px;font-size:10.8px;color:#4c4d57;letter-spacing:-0.292px;">May 3</span>
<span class="t" style="left:765.15px;top:588.35px;font-size:10.8px;color:#4c4d57;letter-spacing:-0.417px;">May 9</span>
<span class="t" style="left:893.05px;top:588.35px;font-size:10.8px;color:#fff;letter-spacing:-0.07px;-webkit-text-stroke:0.25px #fff;">To do</span>
</div>
</body></html>
